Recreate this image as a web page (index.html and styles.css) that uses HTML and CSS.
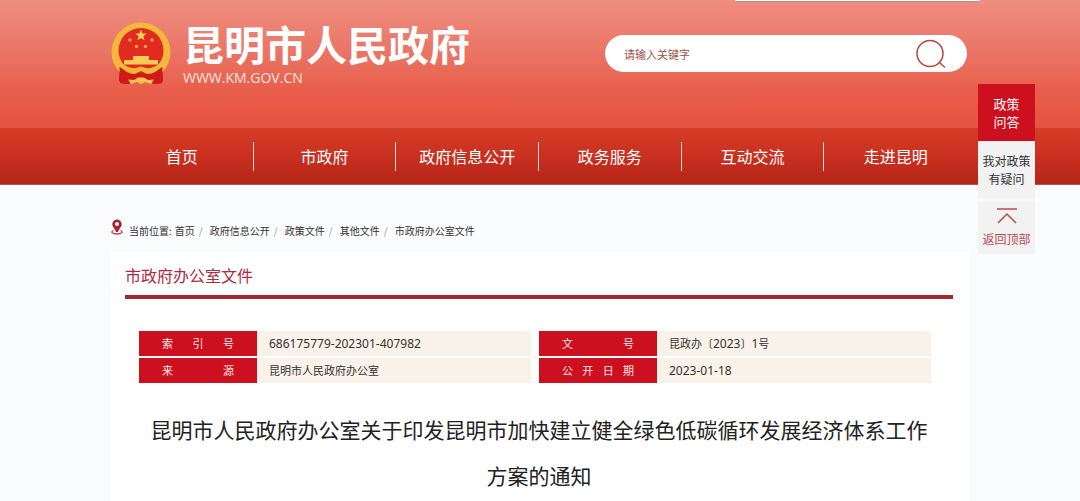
FILE: index.html
```html
<!DOCTYPE html>
<html lang="zh-CN">
<head>
<meta charset="utf-8">
<title>昆明市人民政府</title>
<link rel="stylesheet" href="styles.css">
</head>
<body>
<div class="drop-edge"></div>
<header class="banner">
  <div class="wrap banner-row">
    <a class="brand" href="#">
      <svg class="emblem" viewBox="0 0 60 64" aria-hidden="true">
        <path d="M9 42 L8 59 Q15 63 20 61 L30 59 L40 61 Q46 63 52 59 L51 42Z" fill="#c81518"/>
        <circle cx="30" cy="30" r="29.500" fill="#f4b73b"/>
        <circle cx="30" cy="28.500" r="22.500" fill="#e12b20"/>
        <path d="M30 7.500l1.500 3.900 4.200.2-3.300 2.600 1.100 4.100-3.500-2.300-3.500 2.300 1.100-4.100-3.300-2.600 4.200-.2z" fill="#ffd257"/>
        <g fill="#ef9a48"><circle cx="19" cy="18" r="1.800"/><circle cx="41" cy="18" r="1.800"/><circle cx="25.500" cy="24.500" r="1.800"/><circle cx="34.500" cy="24.500" r="1.800"/></g>
        <path d="M22 34h16v4h9v4.500H13V38h9z" fill="#fbc957"/>
        <path d="M8.500 45 L9 61 Q14 63 20 61 L30 58.500 40 61Q46 63 51 61L51.500 45Q47 47 44 49L36 48 30 51 24 48 16 49Q13 47 8.500 45Z" fill="#cf1a1a"/>
        <path d="M10 40Q17 47 25 46l5-1.500 5 1.500Q43 47 50 40l1.500 3.500Q45 52 36 52l-6-3-6 3Q15 52 8.500 43.500Z" fill="#f4b73b"/>
        <path d="M17 57.500l6 .5 4-2.500h6l4 2.500 6-.5-3 4.500-6-2-4 2-4-2-6 2z" fill="#f9c24e"/>
      </svg>
      <span class="brand-text">
        <strong class="brand-name">昆明市人民政府</strong>
        <span class="brand-url">WWW.KM.GOV.CN</span>
      </span>
    </a>
    <form class="search">
      <input class="search-input" type="text" placeholder="请输入关键字" aria-label="请输入关键字">
      <button class="search-button" type="button" aria-label="搜索">
        <svg viewBox="0 0 32 32" width="32" height="32" fill="none" stroke="#b9443f" stroke-width="1.500"><circle cx="15" cy="15.500" r="13"/><path d="M24.500 24.500l5.500 5"/></svg>
      </button>
    </form>
  </div>
</header>
<nav class="nav">
  <div class="wrap nav-row">
    <a href="#">首页</a>
    <a href="#">市政府</a>
    <a href="#">政府信息公开</a>
    <a href="#">政务服务</a>
    <a href="#">互动交流</a>
    <a href="#">走进昆明</a>
  </div>
</nav>
<main class="wrap">
  <div class="crumbs">
    <svg class="pin" viewBox="0 0 12 16" aria-hidden="true"><path d="M2.500 11.500C-.5 12.500.8 15 6 15s6.500-2.500 3.500-3.500" fill="none" stroke="#b8434c" stroke-width="1.300"/><path fill-rule="evenodd" d="M6 .5a4.700 4.700 0 0 0-4.700 4.700C1.300 8 4 9.500 5 13h2c1-3.500 3.700-5 3.700-7.800A4.700 4.700 0 0 0 6 .5zm0 2.600a2 2 0 1 1 0 4 2 2 0 0 1 0-4z" fill="#a72330"/></svg>
    <span class="crumb-label">当前位置:</span>
    <a href="#">首页</a><span class="slash">/</span>
    <a href="#">政府信息公开</a><span class="slash">/</span>
    <a href="#">政策文件</a><span class="slash">/</span>
    <a href="#">其他文件</a><span class="slash">/</span>
    <a href="#">市政府办公室文件</a>
  </div>
  <article class="card">
    <h2 class="section-title">市政府办公室文件</h2>
    <div class="doc">
      <table class="meta">
        <colgroup><col class="col-label"><col class="col-wide"><col class="col-label"><col></colgroup>
        <tr>
          <th scope="row">索引号</th><td class="num">686175779-202301-407982</td>
          <th scope="row">文号</th><td>昆政办〔<span class="num">2023</span>〕<span class="num">1</span>号</td>
        </tr>
        <tr>
          <th scope="row">来源</th><td>昆明市人民政府办公室</td>
          <th scope="row">公开日期</th><td class="num">2023-01-18</td>
        </tr>
      </table>
    </div>
    <h1 class="doc-title">昆明市人民政府办公室关于印发昆明市加快建立健全绿色低碳循环发展经济体系工作方案的通知</h1>
  </article>
</main>
<aside class="side">
  <a class="side-ask" href="#">政策<br>问答</a>
  <a class="side-question" href="#">我对政策<br>有疑问</a>
  <a class="side-top" href="#">
    <svg viewBox="0 0 20 16" width="20" height="16" fill="none" stroke="#c0474c" stroke-width="1.500"><path d="M0 1h20M1 15l9-9 9 9"/></svg>
    返回顶部
  </a>
</aside>
</body>
</html>
```
FILE: styles.css
```css
* { box-sizing: border-box; }
body {
  margin: 0;
  position: relative;
  background: #fbfcfe;
  color: #333;
  font-family: "Noto Sans CJK SC", sans-serif;
  overflow-x: hidden;
}
a { color: inherit; text-decoration: none; }
.wrap { max-width: 858px; margin: 0 auto; }

.drop-edge {
  position: absolute;
  top: 0;
  right: 100px;
  width: 245px;
  height: 2px;
  background: #fff;
  border-bottom: 1px solid #b98783;
  border-radius: 0 0 2px 2px;
}

.banner { background: linear-gradient(#ef8e80, #ea7566 40%, #e85f4b 70%, #e5533f); }
.banner-row {
  display: flex;
  justify-content: space-between;
  align-items: flex-start;
  height: 128px;
  padding-right: 2px;
}
.brand { display: flex; gap: 12px; padding-top: 19px; color: #fff; }
.emblem { width: 60px; height: 64px; margin-top: 3px; }
.brand-text { display: flex; flex-direction: column; }
.brand-name { font-size: 41px; line-height: 48px; font-weight: 700; white-space: nowrap; }
.brand-url {
  font-family: "Open Sans", "Noto Sans", sans-serif;
  font-size: 14px;
  line-height: 22px;
  color: #ffe6df;
}
.search {
  display: flex;
  align-items: center;
  width: 362px;
  height: 37px;
  margin-top: 35px;
  padding: 0 20px 0 19px;
  background: #fff;
  border-radius: 19px;
}
.search-input {
  flex: 1;
  min-width: 0;
  padding: 0;
  border: 0;
  outline: 0;
  background: none;
  font: 11px "Noto Sans CJK SC", sans-serif;
}
.search-input::placeholder { color: #a05048; opacity: 1; }
.search-button { padding: 0; border: 0; background: none; height: 32px; }

.nav { background: linear-gradient(#d43e28, #c9301f 50%, #b52519); border-bottom: 1px solid #a85648; }
.nav-row { display: grid; grid-template-columns: repeat(6, 1fr); padding: 14px 2px 13px 0; }
.nav-row a {
  color: #fff;
  font-size: 16px;
  line-height: 29px;
  text-align: center;
  border-right: 1px solid #f8d5cd;
}
.nav-row a:last-child { border-right: 0; }

.crumbs {
  display: flex;
  height: 67px;
  padding-top: 34px;
  font-size: 10px;
  line-height: 24px;
  white-space: nowrap;
}
.pin { width: 12px; height: 16px; margin-right: 6px; }
.crumb-label { margin-right: 3px; }
.slash { width: 15px; padding-left: 4px; color: #999; }

.card { background: #fff; padding: 8px 16px 20px 14px; }
.section-title {
  margin: 0;
  padding-bottom: 4px;
  border-bottom: 4px solid #a3282e;
  color: #ad2b3f;
  font-size: 16px;
  font-weight: 400;
  line-height: 31px;
}
.doc { padding: 30px 22px 0 14px; }
.meta {
  width: 100%;
  table-layout: fixed;
  border-spacing: 0 2px;
  font-size: 11px;
  line-height: 25px;
}
.col-label { width: 118px; }
.col-wide { width: 282px; }
.meta th {
  padding: 0 23px;
  background: #cd1020;
  color: #ffe5e0;
  font-size: 11px;
  font-weight: 400;
  text-align: justify;
  text-align-last: justify;
}
.meta td {
  padding: 0 0 0 12px;
  background: #f9f2e8;
  background-clip: padding-box;
  border-right: 8px solid #fff;
}
.meta td:last-child { border-right: 0; }
.num { font-family: "Noto Sans", "Noto Sans CJK SC", sans-serif; font-size: 12px; }
.doc-title {
  margin: 21px 0 0;
  padding: 0 20px;
  color: #222;
  font-size: 21px;
  font-weight: 400;
  line-height: 46px;
  text-align: center;
}

.side {
  position: absolute;
  top: 84px;
  right: 45px;
  width: 57px;
  display: flex;
  flex-direction: column;
  background: #f8f8f8;
  text-align: center;
  font-size: 12px;
  line-height: 18px;
}
.side-ask { padding: 11px 0 10px; background: #cd1020; color: #fff; font-size: 13px; }
.side-question { padding: 11px 0 10px; background: #f2f2f2; }
.side-top {
  display: flex;
  flex-direction: column;
  align-items: center;
  gap: 6px;
  margin-top: 4px;
  padding: 6px 0;
  background: #f2f2f2;
  color: #b94a50;
}
```
